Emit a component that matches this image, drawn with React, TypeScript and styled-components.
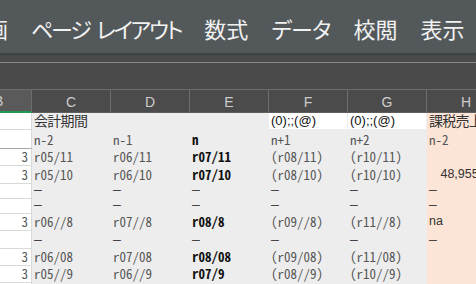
import React from 'react'
import styled, { createGlobalStyle } from 'styled-components'

const GlobalStyle = createGlobalStyle`
    html, body {
        margin: 0;
        padding: 0;
        background: #ffffff;
    }
    body {
        width: 476px;
        height: 284px;
        overflow: hidden;
        font-family: "Noto Sans CJK JP", sans-serif;
    }
`

type Kind = 'b' | 'g' | 'w' | 'p'
type Look = 'data' | 'bold' | 'big' | 'fmt' | 'num' | 'dash'

interface CellSpec {
    text?: string
    look?: Look
    kind: Kind
    right?: boolean
}

interface RowSpec {
    h: number
    strong?: boolean
    cells: CellSpec[]
}

const fills: Record<Kind, string> = {
    b: '#ffffff',
    g: '#ededed',
    w: '#ffffff',
    p: '#fce4d6',
}

const lines: Record<Kind, string> = {
    b: '#d9d9d9',
    g: '#ededed',
    w: '#ededed',
    p: '#fce4d6',
}

const Window = styled.div`
    width: 476px;
    height: 284px;
    overflow: hidden;
    display: flex;
    flex-direction: column;
    background: #ffffff;
`

const Ribbon = styled.div`
    flex: none;
    height: 53px;
    padding-top: 3px;
    box-sizing: border-box;
    background: #53595b;
    display: flex;
    align-items: center;
    overflow: hidden;
`

const TabStrip = styled.div`
    display: flex;
    align-items: center;
    gap: 23px;
    margin-left: -14px;
    white-space: nowrap;
`

const Tab = styled.span<{ $squeeze: number }>`
    font-family: "Noto Sans CJK JP", sans-serif;
    font-size: 22px;
    font-feature-settings: "palt";
    letter-spacing: ${(p) => p.$squeeze}px;
    word-spacing: 4px;
    color: #f1f1f1;
    line-height: 1;
`

const RibbonShadow = styled.div`
    flex: none;
    height: 3px;
    background: linear-gradient(#3b3f41, #464747);
`

const FormulaBar = styled.div`
    flex: none;
    height: 34px;
    box-sizing: border-box;
    background: #4a4a4a;
    border-bottom: 1px solid #6c6c6c;
    padding-top: 6px;
`

const Rule = styled.div`
    height: 1px;
    background: #8a8a8a;
`

const ColumnHeads = styled.div`
    flex: none;
    display: grid;
    grid-template-columns: 32px repeat(6, 79px);
    height: 23px;
    background: #4b4b4b;
`

const Head = styled.div<{ $active?: boolean }>`
    display: flex;
    align-items: center;
    justify-content: ${(p) => (p.$active ? 'flex-start' : 'center')};
    box-sizing: border-box;
    overflow: hidden;
    background: ${(p) => (p.$active ? '#5a5a5a' : '#4b4b4b')};
    border-right: 1px solid #6d6d6d;
    border-bottom: ${(p) => (p.$active ? '2px solid #1f9a55' : '1px solid #5e5e5e')};
    font-family: "Liberation Sans", sans-serif;
    font-size: 14px;
    color: #cdcdcd;
`

const HeadLabel = styled.span<{ $cut?: boolean }>`
    margin-left: ${(p) => (p.$cut ? '-6px' : '0')};
    margin-top: 1px;
`

const Sheet = styled.div`
    display: flex;
    flex-direction: column;
`

const Row = styled.div<{ $h: number }>`
    display: grid;
    grid-template-columns: 32px repeat(6, 79px);
    height: ${(p) => p.$h}px;
`

const Cell = styled.div<{ $kind: Kind; $strong?: boolean; $right?: boolean }>`
    display: flex;
    align-items: flex-end;
    justify-content: ${(p) => (p.$right ? 'flex-end' : 'flex-start')};
    box-sizing: border-box;
    overflow: hidden;
    white-space: nowrap;
    padding: 0 ${(p) => (p.$kind === 'b' ? 3 : 2)}px 1px 2px;
    background: ${(p) => fills[p.$kind]};
    border-right: 1px solid ${(p) => lines[p.$kind]};
    border-bottom: 1px solid ${(p) => (p.$strong && p.$kind === 'b' ? '#a6a6a6' : lines[p.$kind])};
`

const looks: Record<Look, string> = {
    data: `
        font-family: "Noto Sans CJK JP", sans-serif;
        font-feature-settings: "hwid";
        font-size: 13px;
        color: #555555;
    `,
    bold: `
        font-family: "Noto Sans CJK JP", sans-serif;
        font-feature-settings: "hwid";
        font-size: 13px;
        font-weight: 700;
        color: #111111;
    `,
    big: `
        font-family: "Noto Sans CJK JP", sans-serif;
        font-size: 14px;
        letter-spacing: -0.7px;
        color: #333333;
    `,
    fmt: `
        font-family: "Liberation Sans", sans-serif;
        font-size: 13px;
        color: #111111;
    `,
    num: `
        font-family: "Liberation Sans", sans-serif;
        font-size: 12.5px;
        color: #333333;
    `,
    dash: `
        font-family: "Liberation Sans", sans-serif;
        font-size: 14px;
        color: #444444;
    `,
}

const Value = styled.span<{ $look: Look }>`
    line-height: 15px;
    ${(p) => looks[p.$look]}
`

const tabs: [string, number][] = [
    ['画', 0],
    ['ページ レイアウト', -2.2],
    ['数式', 0],
    ['データ', -0.8],
    ['校閲', 0],
    ['表示', 0],
]
const heads = ['B', 'C', 'D', 'E', 'F', 'G', 'H']

const dash = '–'

// one data row: B value, C..G values (E is bold), H value
const dataRow = (h: number, b: string, c: string[], hv: string, hLook: Look = 'num'): RowSpec => ({
    h,
    cells: [
        { kind: 'b', text: b, look: 'data', right: true },
        { kind: 'g', text: c[0], look: c[0] === dash ? 'dash' : 'data' },
        { kind: 'g', text: c[1], look: c[1] === dash ? 'dash' : 'data' },
        { kind: 'g', text: c[2], look: c[2] === dash ? 'dash' : 'bold' },
        { kind: 'g', text: c[3], look: c[3] === dash ? 'dash' : 'data' },
        { kind: 'g', text: c[4], look: c[4] === dash ? 'dash' : 'data' },
        { kind: 'p', text: hv, look: hLook, right: hLook === 'num' && hv !== 'na' },
    ],
})

const dashes = [dash, dash, dash, dash, dash]

const rows: RowSpec[] = [
    {
        h: 17,
        cells: [
            { kind: 'b' },
            { kind: 'g', text: '会計期間', look: 'big' },
            { kind: 'g' },
            { kind: 'g' },
            { kind: 'w', text: '(0);;(@)', look: 'fmt' },
            { kind: 'w', text: '(0);;(@)', look: 'fmt' },
            { kind: 'p', text: '課税売上高', look: 'big' },
        ],
    },
    { ...dataRow(19, '', ['n-2', 'n-1', 'n', 'n+1', 'n+2'], 'n-2', 'data'), strong: true },
    dataRow(17, '3', ['r05/11', 'r06/11', 'r07/11', '(r08/11)', '(r10/11)'], ''),
    dataRow(18, '3', ['r05/10', 'r06/10', 'r07/10', '(r08/10)', '(r10/10)'], '48,955,120'),
    dataRow(15, '', dashes, dash, 'dash'),
    dataRow(15, '', dashes, dash, 'dash'),
    dataRow(17, '3', ['r06//8', 'r07//8', 'r08/8', '(r09//8)', '(r11//8)'], 'na'),
    dataRow(18, '', dashes, dash, 'dash'),
    dataRow(17, '3', ['r06/08', 'r07/08', 'r08/08', '(r09/08)', '(r11/08)'], ''),
    dataRow(17, '3', ['r05//9', 'r06//9', 'r07/9', '(r08//9)', '(r10//9)'], ''),
    dataRow(17, '3', ['r05/8', 'r06/8', 'r07/8', '(r08/8)', '(r10/8)'], ''),
]

const App = () => {
    return (
        <Window>
            <GlobalStyle />
            <Ribbon>
                <TabStrip>
                    {tabs.map(([t, s]) => (
                        <Tab key={t} $squeeze={s}>{t}</Tab>
                    ))}
                </TabStrip>
            </Ribbon>
            <RibbonShadow />
            <FormulaBar>
                <Rule />
            </FormulaBar>
            <ColumnHeads>
                {heads.map((h, i) => (
                    <Head key={h} $active={i === 0}>
                        <HeadLabel $cut={i === 0}>{h}</HeadLabel>
                    </Head>
                ))}
            </ColumnHeads>
            <Sheet>
                {rows.map((r, ri) => (
                    <Row key={ri} $h={r.h}>
                        {r.cells.map((c, ci) => (
                            <Cell key={ci} $kind={c.kind} $strong={r.strong} $right={c.right}>
                                {c.text && <Value $look={c.look ?? 'data'}>{c.text}</Value>}
                            </Cell>
                        ))}
                    </Row>
                ))}
            </Sheet>
        </Window>
    )
}

export default App
